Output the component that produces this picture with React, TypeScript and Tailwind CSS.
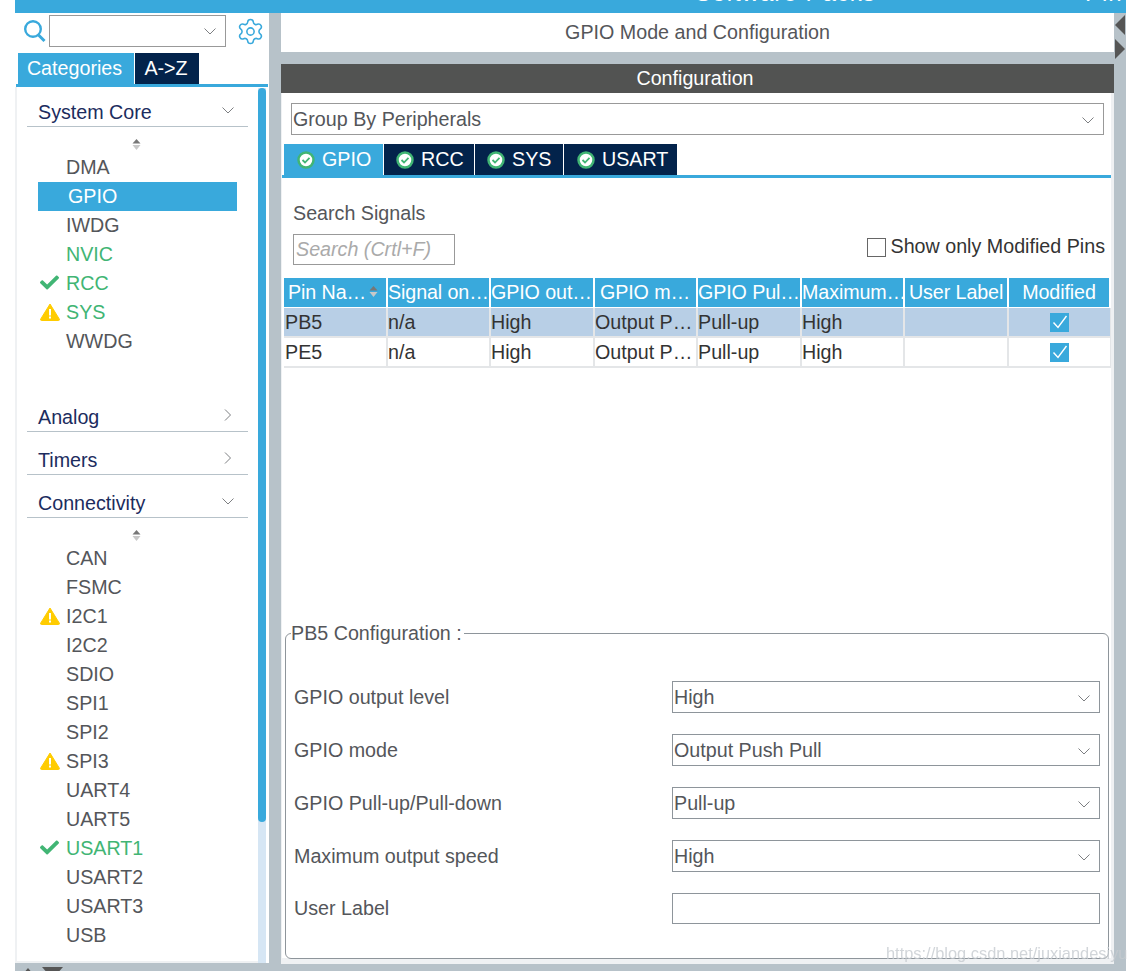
import React from 'react';
import { Settings } from 'lucide-react';
import { FaCheck } from 'react-icons/fa';

const Chevron: React.FC<{ right?: boolean }> = ({ right }) => (
  <svg width="14" height="14" viewBox="0 0 14 14" fill="none" stroke="#7d7f82" strokeWidth="1">
    <path d={right ? 'M4 1.5 L9.5 7 L4 12.5' : 'M1.5 4.5 L7 10 L12.5 4.5'} />
  </svg>
);

const SortIcon = () => (
  <svg width="9" height="11" viewBox="0 0 9 11">
    <path d="M4.5 0 L8.5 4.5 H0.5 Z" fill="#777" />
    <path d="M0.5 6 H8.5 L4.5 11 Z" fill="#c8c8c8" />
  </svg>
);

const WarnIcon = () => (
  <svg width="20" height="18" viewBox="0 0 20 18">
    <path d="M10 1 L19.4 16.2 Q19.6 17.5 18.4 17.5 H1.6 Q0.4 17.5 0.6 16.2 Z" fill="#ffcc00" stroke="#ffcc00" strokeLinejoin="round" />
    <rect x="9" y="6" width="2" height="6.5" fill="#fff" />
    <rect x="9" y="13.5" width="2" height="2" fill="#fff" />
  </svg>
);

const TabCheck = () => (
  <svg width="18" height="18" viewBox="0 0 18 18">
    <circle cx="9" cy="9" r="7.5" fill="#fff" stroke="#41b574" strokeWidth="2.5" />
    <path d="M5.5 9 L8 11.5 L12.5 6.8" fill="none" stroke="#41b574" strokeWidth="1.8" />
  </svg>
);

const SectionHeading: React.FC<{ title: string; open?: boolean; first?: boolean }> = ({ title, open, first }) => (
  <div className={`ml-[10px] w-[221px] flex items-end justify-between border-b border-[#b7c2c9] pl-[11px] pr-[13px] pb-[2px] text-[#1c2c5e] ${first ? 'h-[40px]' : 'h-[43px]'}`}>
    <span className="leading-[24px]">{title}</span>
    <span className="mb-[7px]">
      <Chevron right={!open} />
    </span>
  </div>
);

type Item = { name: string; status?: 'ok' | 'warn'; green?: boolean; selected?: boolean };

const ItemList: React.FC<{ items: Item[] }> = ({ items }) => (
  <div>
    <div className="h-[26px] flex items-center justify-center w-[239px] pt-[8px]">
      <SortIcon />
    </div>
    {items.map((item) => (
      <div
        key={item.name}
        className={`ml-[21px] w-[199px] h-[29px] pb-[2px] flex items-center leading-[24px] ${
          item.selected ? 'bg-[#39a9dc] text-white' : item.green ? 'text-[#41b574]' : 'text-[#54565a]'
        }`}
      >
        <span className={`flex items-center pl-[2px] ${item.selected ? 'w-[30px]' : 'w-[28px]'}`}>
          {item.status === 'ok' && <FaCheck className="text-[#41b574] text-[19px]" />}
          {item.status === 'warn' && <WarnIcon />}
        </span>
        {item.name}
      </div>
    ))}
  </div>
);

const systemCore: Item[] = [
  { name: 'DMA' },
  { name: 'GPIO', selected: true },
  { name: 'IWDG' },
  { name: 'NVIC', green: true },
  { name: 'RCC', green: true, status: 'ok' },
  { name: 'SYS', green: true, status: 'warn' },
  { name: 'WWDG' },
];

const connectivity: Item[] = [
  { name: 'CAN' },
  { name: 'FSMC' },
  { name: 'I2C1', status: 'warn' },
  { name: 'I2C2' },
  { name: 'SDIO' },
  { name: 'SPI1' },
  { name: 'SPI2' },
  { name: 'SPI3', status: 'warn' },
  { name: 'UART4' },
  { name: 'UART5' },
  { name: 'USART1', green: true, status: 'ok' },
  { name: 'USART2' },
  { name: 'USART3' },
  { name: 'USB' },
];

const Sidebar = () => (
  <div className="w-[254px] h-[950px] bg-white flex flex-col">
    {/* Search */}
    <div className="h-[34px] pt-[2px] flex items-center">
      <svg className="ml-[8px] mr-[3px]" width="23" height="26" viewBox="0 0 23 26" fill="none" stroke="#39a9dc">
        <circle cx="10" cy="11" r="7.8" strokeWidth="2.4" />
        <path d="M15.5 17 L21.5 23" strokeWidth="3" />
      </svg>
      <div className="w-[177px] h-[32px] border border-[#999] flex items-center justify-end pr-[8px]">
        <Chevron />
      </div>
      <Settings className="ml-[10px]" size={29} color="#39a9dc" strokeWidth={1.3} />
    </div>
    {/* Tabs */}
    <div className="mt-[6px] ml-[3px] h-[31px] flex gap-[1px]">
      <div className="w-[116px] pr-[3px] bg-[#39a9dc] text-white flex items-center justify-center">Categories</div>
      <div className="w-[64px] pr-[2px] bg-[#03234b] text-white flex items-center justify-center">A-&gt;Z</div>
    </div>
    <div className="ml-[1px] w-[252px] h-[3px] bg-[#39a9dc]" />
    <div className="flex-1 flex min-h-0">
      <div className="flex-1 border-l-2 border-b-2 border-[#eff1f3] overflow-hidden">
        <SectionHeading title="System Core" open first />
        <ItemList items={systemCore} />
        <div className="h-[33px]" />
        <SectionHeading title="Analog" />
        <SectionHeading title="Timers" />
        <SectionHeading title="Connectivity" open />
        <ItemList items={connectivity} />
      </div>
      <div className="w-[8px] bg-[#d6e6f4] mt-[1px]">
        <div className="h-[734px] bg-[#39a9dc] rounded-[4px]" />
      </div>
      <div className="w-[3px]" />
    </div>
  </div>
);

const cols = 'grid grid-cols-[104px_103px_104px_103px_104px_103px_104px_102px]';

const headers = ['Pin Na…', 'Signal on…', 'GPIO out…', 'GPIO m…', 'GPIO Pul…', 'Maximum…', 'User Label', 'Modified'];

const SignalsTable = () => (
  <div className="ml-[2px] w-[827px]">
    <div className={`${cols} h-[30px]`}>
      {headers.map((h, i) => (
        <div
          key={h}
          className={`mb-[1px] mr-[2px] h-[29px] pb-[2px] leading-[24px] bg-[#39a9dc] text-white flex items-center whitespace-nowrap tracking-[-0.1px] ${
            i === 7 ? 'justify-center' : i === 3 ? 'pl-[5px]' : i === 0 ? 'pl-[4px]' : i === 6 ? 'pl-[4px]' : 'pl-0'
          }`}
        >
          {h}
          {i === 0 && (
            <span className="ml-[3px] flex">
              <SortIcon />
            </span>
          )}
        </div>
      ))}
    </div>
    {['PB5', 'PE5'].map((pin, r) => (
      <div key={pin} className={`${cols} h-[30px] leading-[24px] text-[#333] ${r === 0 ? 'bg-[#b8cfe6]' : 'bg-white'}`}>
        {[pin, 'n/a', 'High', 'Output P…', 'Pull-up', 'High', ''].map((v, i) => (
          <div key={i} className={`h-[30px] border-r-2 border-b-2 border-[#e4e6e8] flex items-center whitespace-nowrap ${i === 0 ? 'pl-[1px]' : 'pl-0'}`}>
            {v}
          </div>
        ))}
        <div className="h-[30px] border-b-2 border-r border-[#e4e6e8] flex items-center justify-center">
          <div className="w-[19px] h-[19px] bg-[#39a9dc] flex items-center justify-center">
            <svg width="16" height="14" viewBox="0 0 16 14" fill="none" stroke="#fff" strokeWidth="1.4">
              <path d="M1.5 7.5 L6 12.5 L14.5 1" />
            </svg>
          </div>
        </div>
      </div>
    ))}
  </div>
);

const ConfigRow: React.FC<{ label: string; value?: string; plain?: boolean }> = ({ label, value, plain }) => (
  <div className="flex items-center">
    <div className="w-[386px] pl-[8px] pt-[1px] text-[#54565a]">{label}</div>
    <div className={`w-[428px] border border-[#8e959b] flex items-center justify-between pl-[1px] pr-[8px] pt-[1px] text-[#54565a] ${plain ? 'h-[31px]' : 'h-[32px]'}`}>
      <span>{value}</span>
      {!plain && <Chevron />}
    </div>
  </div>
);

const Main = () => (
  <div className="w-[833px] h-[951px] flex flex-col relative">
    <div className="h-[39px] bg-white flex items-center justify-center text-[#54565a]">GPIO Mode and Configuration</div>
    <div className="mt-[12px] h-[29px] pr-[5px] bg-[#525352] text-white flex items-center justify-center">Configuration</div>
    <div className="flex-1 min-h-0 bg-white border-l border-r-[3px] border-b-[6px] border-[#eff1f3] flex flex-col">
      <div className="mt-[10px] ml-[9px] w-[813px] h-[32px] pt-[1px] border border-[#999] flex items-center justify-between pl-[1px] pr-[8px] text-[#54565a]">
        <span>Group By Peripherals</span>
        <Chevron />
      </div>
      {/* Tabs */}
      <div className="mt-[9px] ml-[2px] h-[31px] flex gap-[1px]">
        <div className="w-[99px] bg-[#39a9dc] text-white flex items-center pl-[13px] gap-[7px]">
          <TabCheck />
          GPIO
        </div>
        <div className="w-[90px] bg-[#03234b] text-white flex items-center pl-[12px] gap-[7px]">
          <TabCheck />
          RCC
        </div>
        <div className="w-[88px] bg-[#03234b] text-white flex items-center pl-[12px] gap-[7px]">
          <TabCheck />
          SYS
        </div>
        <div className="w-[113px] bg-[#03234b] text-white flex items-center pl-[13px] gap-[7px]">
          <TabCheck />
          USART
        </div>
      </div>
      <div className="h-[3px] bg-[#39a9dc]" />
      {/* Signal search */}
      <div className="mt-[23px] ml-[11px] mr-[6px] flex items-end justify-between">
        <div>
          <div className="leading-[24px] text-[#54565a]">Search Signals</div>
          <div className="mt-[9px] w-[162px] h-[31px] border border-[#999] flex items-center pl-[2px] italic text-[#aaa]">Search (Crtl+F)</div>
        </div>
        <div className="flex items-center gap-[5px] mb-[3px] text-[#333]">
          <div className="w-[19px] h-[19px] border border-[#666]" />
          Show only Modified Pins
        </div>
      </div>
      <div className="mt-[13px]">
        <SignalsTable />
      </div>
      {/* Pin configuration */}
      <fieldset className="mt-auto mb-[-1px] ml-[3px] w-[824px] h-[338px] border border-[#8e959b] rounded-[6px]">
        <legend className="ml-[5px] pr-[2px] leading-[24px] text-[#54565a]">PB5 Configuration :</legend>
        <div className="mt-[36px] flex flex-col gap-[21px]">
          <ConfigRow label="GPIO output level" value="High" />
          <ConfigRow label="GPIO mode" value="Output Push Pull" />
          <ConfigRow label="GPIO Pull-up/Pull-down" value="Pull-up" />
          <ConfigRow label="Maximum output speed" value="High" />
          <ConfigRow label="User Label" plain />
        </div>
      </fieldset>
    </div>
    <div className="absolute left-[605px] top-[931px] text-[16.4px] leading-[18px] text-[#c5cacf]/80 whitespace-nowrap blur-[0.3px]">
      https://blog.csdn.net/juxiandesiyu
    </div>
  </div>
);

const App: React.FC = () => {
  return (
    <div className="w-[1128px] h-[971px] bg-white flex overflow-hidden font-['Liberation_Sans',Arial,sans-serif] text-[19.7px]">
      <div className="w-[15px]" />
      <div className="w-[1111px] bg-[#b7c2c9] flex flex-col">
        {/* Top bar, text cut off by the window */}
        <div className="h-[13px] bg-[#39a9dc] overflow-hidden flex text-white text-[24px] leading-none whitespace-nowrap">
          <div className="ml-[680px] w-[390px] shrink-0 -mt-[19px] tracking-[1px]">Software Packs</div>
          <div className="-mt-[19px] tracking-[1px]">Pinout</div>
        </div>
        <div className="flex">
          <div>
            <Sidebar />
            <div className="flex items-start gap-[9px] pl-[8px] pt-[4px] h-[8px] overflow-hidden">
              <svg className="mt-[1px]" width="10" height="6" viewBox="0 0 10 6">
                <path d="M5 0 L10 6 H0 Z" fill="#555" />
              </svg>
              <svg width="21" height="8" viewBox="0 0 21 8">
                <path d="M0 0 H21 L10.5 12 Z" fill="#555" />
              </svg>
            </div>
          </div>
          <div className="ml-[12px]">
            <Main />
          </div>
          <div className="w-[12px] pl-[1px] pt-[2px] flex flex-col gap-[4px]">
            <svg width="10" height="20" viewBox="0 0 10 20">
              <path d="M10 0 V20 L0 10 Z" fill="#555" />
            </svg>
            <svg width="10" height="20" viewBox="0 0 10 20">
              <path d="M0 0 V20 L10 10 Z" fill="#555" />
            </svg>
          </div>
        </div>
      </div>
    </div>
  );
};

export default App;
